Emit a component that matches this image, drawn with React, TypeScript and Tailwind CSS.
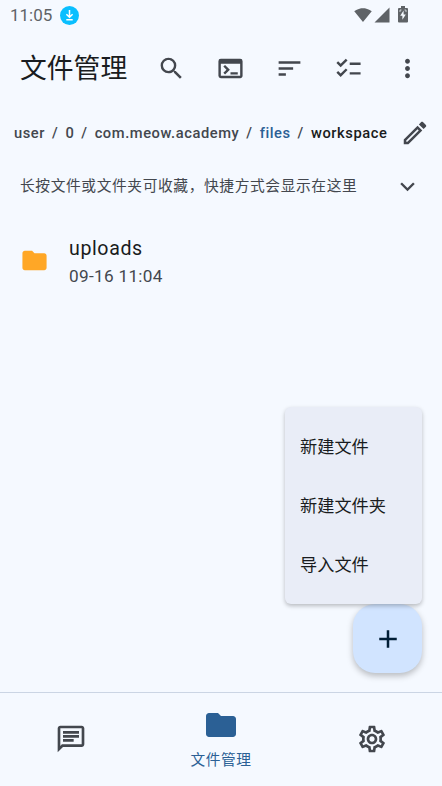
import { Fragment } from 'react';
import {
    MdAdd,
    MdChecklist,
    MdFolder,
    MdKeyboardArrowDown,
    MdMoreVert,
    MdOutlineChat,
    MdOutlineEdit,
    MdOutlineSettings,
    MdOutlineTerminal,
    MdSearch,
    MdSignalCellular4Bar,
    MdSignalWifi4Bar,
    MdSort,
} from 'react-icons/md';

const crumbs = ['user', '0', 'com.meow.academy', 'files', 'workspace'];

const menuItems = ['新建文件', '新建文件夹', '导入文件'];

const toolbar = [
    { label: '搜索', icon: MdSearch },
    { label: '终端', icon: MdOutlineTerminal },
    { label: '排序', icon: MdSort },
    { label: '多选', icon: MdChecklist },
    { label: '更多', icon: MdMoreVert },
];

const crumbColor = (name: string) => {
    if (name === 'files') return 'text-[#2b6095]';
    if (name === 'workspace') return 'text-[#191c20]';
    return 'text-[#43474e]';
};

const StatusBar = () => (
    <div className="flex h-[30px] items-center pl-[10px] pr-[34px] text-[#5f6367]">
        <span className="text-[17px] leading-[30px]">11:05</span>
        <span className="ml-[8px] flex size-[19px] items-center justify-center rounded-full bg-[#0abfff]">
            <svg viewBox="0 0 19 19" className="size-[19px]" fill="none" stroke="#fff" strokeWidth="1.5">
                <path d="M9.5 4v7M6.4 8.2l3.1 3.1 3.1-3.1M6.3 13.8h6.4" />
            </svg>
        </span>
        <div className="ml-auto flex items-center">
            <MdSignalWifi4Bar className="size-[18px]" />
            <MdSignalCellular4Bar className="ml-[1px] size-[18px]" />
            <svg viewBox="0 0 10 17" className="mb-[2px] ml-[7px] h-[17px] w-[10px]">
                <path fill="currentColor" d="M3 0h4v2h2q1 0 1 1v12.500q0 1-1 1H1q-1 0-1-1V3q0-1 1-1h2z" />
                <path fill="#f5faff" d="M5.600 4.500 2.200 9.800h2.200v4l3.400-5.400H5.600z" />
                <path fill="none" stroke="#f5faff" strokeWidth=".7" d="M2 6V4h1.500M6.500 4H8v2" />
            </svg>
        </div>
    </div>
);

const App = () => {
    return (
        <div className="relative flex h-[786px] w-[442px] flex-col overflow-hidden bg-[#f5f9ff] font-['Roboto','Noto_Sans_CJK_SC',sans-serif] text-[#191c20]">
            <StatusBar />

            {/* App bar */}
            <header className="flex h-[77px] items-center pl-[20px] pr-[5px]">
                <h1 className="text-[26.800px] leading-[36px]">文件管理</h1>
                <div className="ml-auto flex text-[#43474e]">
                    {toolbar.map(({ label, icon: Icon }) => (
                        <button key={label} aria-label={label} className="flex size-[59px] items-center justify-center">
                            <Icon className="size-[29px]" />
                        </button>
                    ))}
                </div>
            </header>

            {/* Path */}
            <nav className="flex h-[51px] items-center justify-between pl-[14px] pr-[12px]">
                <div className="flex gap-[7px] text-[14.700px] font-medium leading-5 tracking-[0.570px]">
                    {crumbs.map((name, index) => (
                        <Fragment key={name}>
                            {index > 0 && <span className="text-[#43474e]">/</span>}
                            <span className={crumbColor(name)}>{name}</span>
                        </Fragment>
                    ))}
                </div>
                <MdOutlineEdit className="size-[30px] text-[#43474e]" />
            </nav>

            <div className="flex h-[57px] items-center justify-between pb-px pl-[20px] pr-[20px] text-[#43474e]">
                <p className="whitespace-nowrap text-[14.740px] leading-5 tracking-[0.600px]">
                    长按文件或文件夹可收藏，快捷方式会显示在这里
                </p>
                <MdKeyboardArrowDown className="size-[29px]" />
            </div>

            {/* File list */}
            <main className="flex-1">
                <div className="flex h-[90px] items-center pl-[20px]">
                    <MdFolder className="size-[29px] text-[#ffa726]" />
                    <div className="ml-[20px] pt-[2px]">
                        <div className="text-[19.600px] leading-[29px] tracking-[0.600px]">uploads</div>
                        <div className="text-[17.200px] leading-[26px] tracking-[0.300px] text-[#43474e]">09-16 11:04</div>
                    </div>
                </div>
            </main>

            {/* Bottom tabs */}
            <footer className="grid h-[94px] grid-cols-3 border-t border-[#cbd5e4] text-[#43474e]">
                <button aria-label="聊天" className="flex items-center justify-center pb-[2px] pr-[6px]">
                    <MdOutlineChat className="size-[32px]" />
                </button>
                <button className="flex flex-col items-center pt-[14px] text-[#2b6095]">
                    <MdFolder className="size-[36px]" />
                    <span className="mt-[7px] text-[14.700px] leading-5 tracking-[0.500px]">文件管理</span>
                </button>
                <button aria-label="设置" className="flex items-center justify-center pb-[2px] pl-[7px]">
                    <MdOutlineSettings className="size-[32px]" />
                </button>
            </footer>

            {/* Floating button with its menu */}
            <button
                aria-label="新建"
                className="absolute bottom-[113px] right-[20px] flex size-[69px] items-center justify-center rounded-[22px] bg-[#d1e4ff] text-[#001d36] shadow-[0_3px_6px_rgba(0,0,0,0.25)]"
            >
                <MdAdd className="size-[30px]" />
            </button>
            <div className="absolute right-[20px] top-[407px] flex h-[197px] w-[137px] flex-col rounded-[6px] bg-[#e9edf7] py-[10px] shadow-[0_2px_4px_rgba(0,0,0,0.25)]">
                {menuItems.map((item) => (
                    <button key={item} className="flex h-[59px] items-center pl-[15px] text-[17.200px] leading-6">
                        {item}
                    </button>
                ))}
            </div>
        </div>
    );
};

export default App;
